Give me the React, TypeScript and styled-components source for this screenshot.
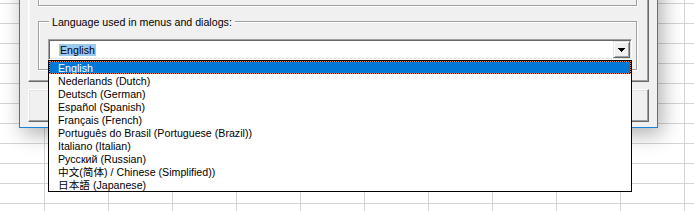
import React from "react";
import styled, { createGlobalStyle } from "styled-components";

const Global = createGlobalStyle`
  html, body { margin: 0; padding: 0; background: #fff; overflow: hidden; }
  #root { width: 694px; height: 211px; }
`;

const Sheet = styled.div`
  position: relative;
  width: 694px;
  height: 211px;
  overflow: hidden;
  background-color: #fff;
  background-image:
    linear-gradient(to right, #d4d4d4 1px, transparent 1px),
    linear-gradient(to bottom, #d4d4d4 1px, transparent 1px);
  background-size: 64px 100%, 100% 20px;
  background-position: 44px 0, 0 3px;
  font-family: "Liberation Sans", "Noto Sans CJK SC", Arial, sans-serif;
  font-size: 10.65px;
  color: #000;
`;

const Dialog = styled.div`
  position: absolute;
  left: 19px;
  top: -60px;
  width: 639px;
  box-sizing: border-box;
  border: 1px solid #1883d7;
  background: #f0f0f0;
  box-shadow: 4px 6px 20px rgba(0, 0, 0, 0.32);
  padding: 8px 8px 5px 8px;
  display: flex;
  flex-direction: column;
  gap: 7px;
`;

const Panel = styled.div`
  height: 133px;
  box-sizing: border-box;
  border: 1px solid;
  border-color: #fff #696969 #696969 #fff;
  box-shadow: inset -1px -1px 0 #a0a0a0, inset 1px 1px 0 #f7f7f7;
  padding: 0 0 0 9px;
  display: flex;
  flex-direction: column;
`;

const GroupBox = styled.div<{ $top: number; $height: number }>`
  position: relative;
  width: 599px;
  height: ${(p) => p.$height}px;
  margin-top: ${(p) => p.$top}px;
  box-sizing: border-box;
  border: 1px solid #a0a0a0;
  box-shadow: 1px 1px 0 #fff, inset 1px 1px 0 #fff;
`;

const LanguageGroup = styled(GroupBox)`
  padding: 17px 0 0 9px;
`;

const Legend = styled.span`
  position: absolute;
  top: -6px;
  left: 10px;
  padding: 0 3px;
  line-height: 13px;
  background: #f0f0f0;
  white-space: nowrap;
`;

const Combo = styled.div`
  position: relative;
  width: 584px;
  height: 21px;
  box-sizing: border-box;
  border: 1px solid;
  border-color: #a0a0a0 #fff #fff #a0a0a0;
  box-shadow: inset 1px 1px 0 #696969, inset -1px -1px 0 #e3e3e3;
  background: #fff;
  padding: 1px;
  display: flex;
  align-items: flex-start;
`;

const Selected = styled.span`
  margin: 3px 0 0 9px;
  height: 12px;
  line-height: 12px;
  padding: 0 1px;
  background: #99c9ef;
  white-space: nowrap;
`;

const DropButton = styled.div`
  margin-left: auto;
  width: 17px;
  height: 17px;
  box-sizing: border-box;
  border: 1px solid;
  border-color: #e3e3e3 #696969 #696969 #e3e3e3;
  box-shadow: inset 1px 1px 0 #fff, inset -1px -1px 0 #a0a0a0;
  background: #f0f0f0;
  display: flex;
  align-items: center;
  justify-content: center;
  svg { display: block; margin-top: 1px; }
`;

const List = styled.ul`
  position: absolute;
  left: -1px;
  top: 20px;
  z-index: 10;
  width: 584px;
  height: 132px;
  box-sizing: border-box;
  margin: 0;
  padding: 0;
  list-style: none;
  border: 1px solid #000;
  background: #fff;
  overflow: hidden;
`;

const Item = styled.li<{ $active?: boolean }>`
  position: relative;
  height: 13px;
  line-height: 13px;
  padding-left: 9px;
  white-space: nowrap;
  ${(p) =>
    p.$active
      ? `
    background: #0078d7;
    color: #fff;
    box-shadow: inset 0 0 0 1px #000;
    &::after {
      content: "";
      position: absolute;
      inset: 0;
      border: 1px dotted #ff8728;
    }
  `
      : ""}
`;

const ItemText = styled.span`
  position: relative;
  top: 1px;
`;

const ButtonRow = styled.div`
  display: flex;
  justify-content: space-between;
`;

const Button = styled.div`
  width: 140px;
  height: 33px;
  box-sizing: border-box;
  border: 1px solid;
  border-color: #fff #696969 #696969 #fff;
  box-shadow: inset -1px -1px 0 #a0a0a0, inset 1px 1px 0 #e3e3e3;
  background: #f0f0f0;
`;

const languages = [
  "English",
  "Nederlands (Dutch)",
  "Deutsch (German)",
  "Español (Spanish)",
  "Français (French)",
  "Português do Brasil (Portuguese (Brazil))",
  "Italiano (Italian)",
  "Русский (Russian)",
  "中文(简体) / Chinese (Simplified))",
  "日本語 (Japanese)",
];

const DownArrow = () => (
  <svg width="7" height="4" viewBox="0 0 7 4" shapeRendering="crispEdges">
    <path d="M0 0h7v1H0zM1 1h5v1H1zM2 2h3v1H2zM3 3h1v1H3z" fill="#000" />
  </svg>
);

export default function App() {
  return (
    <Sheet>
      <Global />
      <Dialog>
        <Panel>
          <GroupBox $top={10} $height={46} />
          <LanguageGroup $top={15} $height={49}>
            <Legend>Language used in menus and dialogs:</Legend>
            <Combo>
              <Selected>English</Selected>
              <DropButton>
                <DownArrow />
              </DropButton>
              <List>
                {languages.map((l, i) => (
                  <Item key={l} $active={i === 0}>
                    <ItemText>{l}</ItemText>
                  </Item>
                ))}
              </List>
            </Combo>
          </LanguageGroup>
        </Panel>
        <ButtonRow>
          <Button />
          <Button />
        </ButtonRow>
      </Dialog>
    </Sheet>
  );
}
